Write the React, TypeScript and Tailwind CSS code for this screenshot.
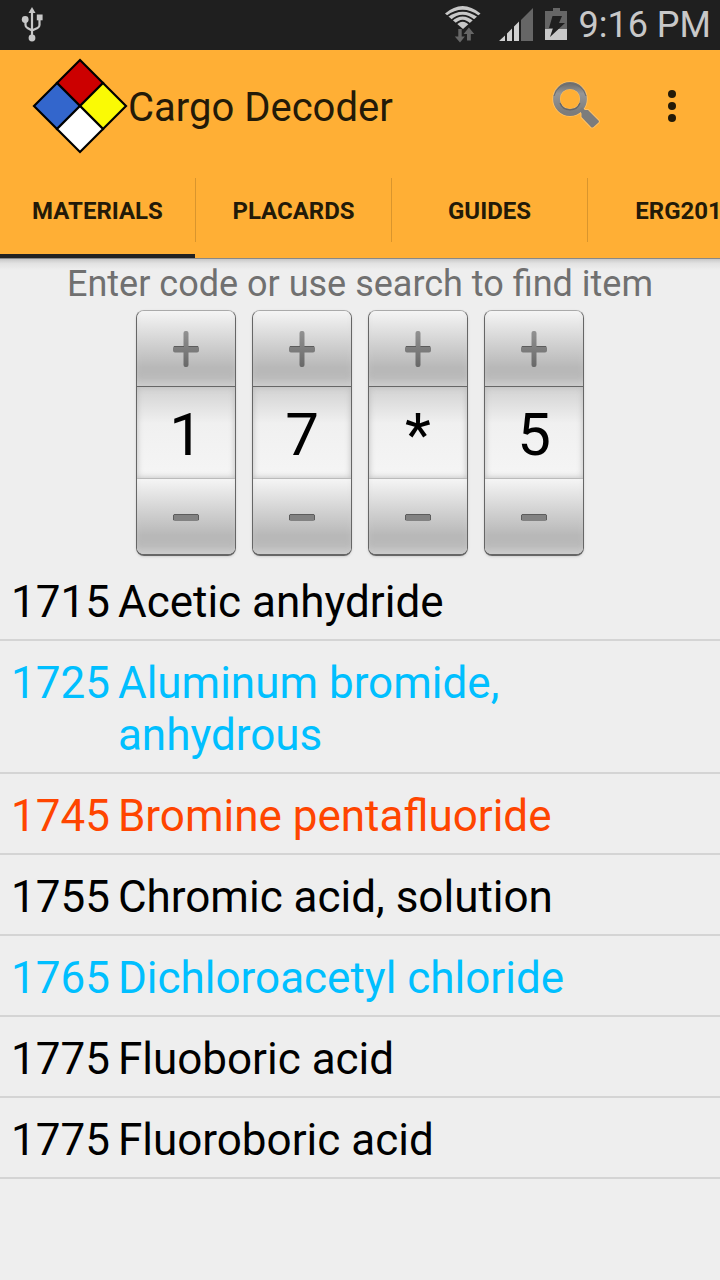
import { useState } from 'react';

type Material = { code: string; name: string; kind: 'normal' | 'water' | 'toxic' };

const TABS = ['MATERIALS', 'PLACARDS', 'GUIDES', 'ERG2012'];

const MATERIALS: Material[] = [
  { code: '1715', name: 'Acetic anhydride', kind: 'normal' },
  { code: '1725', name: 'Aluminum bromide, anhydrous', kind: 'water' },
  { code: '1745', name: 'Bromine pentafluoride', kind: 'toxic' },
  { code: '1755', name: 'Chromic acid, solution', kind: 'normal' },
  { code: '1765', name: 'Dichloroacetyl chloride', kind: 'water' },
  { code: '1775', name: 'Fluoboric acid', kind: 'normal' },
  { code: '1775', name: 'Fluoroboric acid', kind: 'normal' },
];

const KIND_COLORS = {
  normal: 'text-black',
  water: 'text-[#00bfff]',
  toxic: 'text-[#ff4500]',
};

const WHEEL = ['*', '0', '1', '2', '3', '4', '5', '6', '7', '8', '9'];

function StatusBar() {
  return (
    <div className="flex h-[50px] items-center bg-[#1f1f1f] pr-[9px] pl-5 text-[#c8c8c8]">
      <svg width="24" height="36" viewBox="0 0 24 36" fill="none" stroke="#c8c8c8" strokeWidth="2.200">
        <path d="M12 5v25M5.500 12v6q0 2 2 3l4.500 2.500M19.500 10v8q0 2-2 3L12 23.500" />
        <path d="M12 0l3.500 6h-7z" fill="#c8c8c8" stroke="none" />
        <circle cx="5.200" cy="12.500" r="3.400" fill="#c8c8c8" stroke="none" />
        <path d="M16.800 7.500h5.800v5.800h-5.800z" fill="#c8c8c8" stroke="none" />
        <circle cx="12" cy="31" r="3.400" fill="#c8c8c8" stroke="none" />
      </svg>
      <div className="ml-auto flex items-center">
        <svg width="36" height="38" viewBox="0 0 36 38" className="mr-[18px]">
          <path d="M0 7.500Q17.500-7.500 35.500 7.500L18 23z" fill="#c8c8c8" />
          <g fill="none" stroke="#1f1f1f" strokeWidth="1.800">
            <path d="M2 10.500Q17.500-1 33.500 10.500" />
            <path d="M6 14.800Q17.500 4.500 29.500 14.800" />
            <path d="M10 19Q17.500 10.500 25.500 19" />
          </g>
          <path d="M13.300 23h3.400v7.500h3.200L15 36.500l-5.200-6h3.500z" fill="#666" />
          <path d="M22 34.500h3.800V28h3.400L23.900 21.500 18.600 28H22z" fill="#666" />
        </svg>
        <svg width="34" height="34" viewBox="0 0 34 34" className="mr-3">
          <path d="M22 12L34 0V33H22z" fill="#666" />
          <path d="M0 33l6-5.500V33zM8 25.500l5-5V33H8zM15 18.500l5-5V33h-5z" fill="#d0d0d0" />
        </svg>
        <svg width="22" height="34" viewBox="0 0 22 34" className="mr-3">
          <path d="M8 0h7v3h7v18H0V3h8z" fill="#666" />
          <path d="M0 21h22v11H0z" fill="#c8c8c8" />
          <path d="M7.500 8h9.500l-3 7h6L5 29l3-9H4z" fill="#1f1f1f" />
        </svg>
        <span className="text-[36px] leading-[42px]">9:16 PM</span>
      </div>
    </div>
  );
}

function HazardLogo() {
  return (
    <svg width="96" height="96" viewBox="0 0 96 96" stroke="#000" strokeWidth="2.200">
      <path d="M48 2l23 23-23 23-23-23z" fill="#c00" />
      <path d="M25 25l23 23-23 23L2 48z" fill="#36c" />
      <path d="M71 25l23 23-23 23-23-23z" fill="#fafa05" />
      <path d="M48 48l23 23-23 23-23-23z" fill="#fff" />
    </svg>
  );
}

function SearchIcon() {
  return (
    <svg width="64" height="64" viewBox="0 0 64 64" fill="none">
      <defs>
        <linearGradient id="lens" x1="0" y1="0" x2="0" y2="1">
          <stop offset="0" stopColor="#757575" />
          <stop offset="0.3" stopColor="#969696" />
          <stop offset="1" stopColor="#7c7c7c" />
        </linearGradient>
      </defs>
      <g stroke="#ffd596" strokeOpacity="0.5">
        <circle cx="26" cy="25" r="13.700" strokeWidth="8" />
        <path d="M35.500 36l2.500-2.500 3 2.500h3L54.500 46.500q1 1 0 2L49.500 53q-1.500 1-2.500 0L37.500 43v-3.500z" strokeWidth="2" />
      </g>
      <circle cx="26" cy="25" r="13.500" stroke="url(#lens)" strokeWidth="6.800" />
      <path d="M10 22a16.500 16.500 0 0 1 32 0" stroke="#6c6c6c" />
      <path d="M16 29a10.700 10.700 0 0 0 20 0" stroke="#656565" strokeWidth="1.200" />
      <path d="M35.500 36l2.500-2.500 3 2.500h3L54.500 46.500q1 1 0 2L49.500 53q-1.500 1-2.500 0L37.500 43v-3.500z" fill="#7c7c7c" />
    </svg>
  );
}

function StepButton({ sign, onClick }: { sign: 'plus' | 'minus'; onClick: () => void }) {
  return (
    <button
      type="button"
      aria-label={sign === 'plus' ? 'Increase' : 'Decrease'}
      onClick={onClick}
      className="flex h-[75px] w-full items-center justify-center bg-linear-to-b from-[#f5f5f5] via-[#d4d4d4] via-40% to-[#b8b8b8] to-75% shadow-[inset_0_-8px_8px_-4px_#d0d0d0]"
    >
      <svg width="28" height="38" viewBox="0 0 28 38">
        <defs>
          <linearGradient id="sign" x1="0" y1="0" x2="0" y2="1">
            <stop offset="0" stopColor="#929292" />
            <stop offset="1" stopColor="#686868" />
          </linearGradient>
        </defs>
        {sign === 'plus' ? (
          <>
            <path d="M3 16h8.500V3q0-2 2-2h1q2 0 2 2v13H25q2 0 2 2v2.500q0 2-2 2h-8.500V35q0 2-2 2h-1q-2 0-2-2V22.500H3q-2 0-2-2V18q0-2 2-2z" fill="url(#sign)" />
            <path d="M2 16.500h10M16.500 16.500H26" stroke="#5c5c5c" />
          </>
        ) : (
          <>
            <rect x="1" y="16" width="26" height="7" rx="2" fill="#828282" />
            <path d="M2 16.500h24M1.500 17v5M26.500 17v5" stroke="#5c5c5c" />
          </>
        )}
      </svg>
    </button>
  );
}

function DigitPicker({ label, initial }: { label: string; initial: string }) {
  const [value, setValue] = useState(initial);

  const step = (delta: number) => {
    const next = (WHEEL.indexOf(value) + delta + WHEEL.length) % WHEEL.length;
    setValue(WHEEL[next]);
  };

  return (
    <div className="w-[100px] overflow-hidden rounded-lg border border-b-2 border-[#666] border-t-[#aaa] shadow-sm">
      <StepButton sign="plus" onClick={() => step(1)} />
      <input
        aria-label={label}
        value={value}
        onChange={(e) => setValue(e.target.value.slice(-1) || '*')}
        className="block h-[93px] w-full border-t border-b border-t-[#666] border-b-[#bbb] bg-linear-to-b from-[#d2d2d2] via-[#f0f0f0] via-40% to-[#f5f5f5] pt-1 text-center text-[60px] leading-[70px] text-black shadow-[inset_0_0_6px_#bbb] outline-none"
      />
      <StepButton sign="minus" onClick={() => step(-1)} />
    </div>
  );
}

export default function App() {
  const [tab, setTab] = useState('MATERIALS');

  return (
    <div className="min-h-screen overflow-hidden bg-[#eee] font-[Roboto,sans-serif]">
      <StatusBar />

      <header className="bg-[#ffaf35] text-[#231a08]">
        <div className="flex h-28 items-center pl-8">
          <HazardLogo />
          <h1 className="flex-1 pt-1 text-[40px] leading-[48px]">Cargo Decoder</h1>
          <button type="button" aria-label="Search" className="flex h-24 w-24 items-center justify-center">
            <SearchIcon />
          </button>
          <button type="button" aria-label="More options" className="flex h-24 w-24 items-center justify-center">
            <svg width="8" height="32" viewBox="0 0 8 32" fill="currentColor">
              <circle cx="4" cy="4" r="4" />
              <circle cx="4" cy="16" r="4" />
              <circle cx="4" cy="28" r="4" />
            </svg>
          </button>
        </div>
        <nav className="flex h-24 overflow-hidden">
          {TABS.map((t) => (
            <button
              key={t}
              type="button"
              onClick={() => setTab(t)}
              className="flex w-[196px] shrink-0 items-center"
            >
              <span
                className={`flex h-full flex-1 items-center justify-center border-b-4 pt-1.5 text-2xl font-bold ${
                  t === tab ? 'border-[#222]' : 'border-transparent'
                }`}
              >
                {t}
              </span>
              <span className="h-16 w-px bg-[#d9952d]" />
            </button>
          ))}
        </nav>
      </header>

      <main>
        <div className="h-3 border-t border-[#888] bg-linear-to-b from-[#c8c8c8] via-[#e2e2e2] via-40% to-[#eee]" />
        <p className="-mt-[7px] text-center text-[36px] leading-[42px] text-[#707070]">
          Enter code or use search to find item
        </p>
        <div className="mt-[5px] flex justify-center gap-4">
          <DigitPicker label="First digit" initial="1" />
          <DigitPicker label="Second digit" initial="7" />
          <DigitPicker label="Third digit" initial="*" />
          <DigitPicker label="Fourth digit" initial="5" />
        </div>

        <ul className="mt-1">
          {MATERIALS.map((m) => (
            <li key={m.name} className="border-b-2 border-[#d4d4d4]">
              <button
                type="button"
                className={`flex w-full gap-2 px-[11px] pt-4 pb-[11px] text-left text-[44px] leading-[52px] ${KIND_COLORS[m.kind]}`}
              >
                <span>{m.code}</span>
                <span>{m.name}</span>
              </button>
            </li>
          ))}
        </ul>
      </main>
    </div>
  );
}
